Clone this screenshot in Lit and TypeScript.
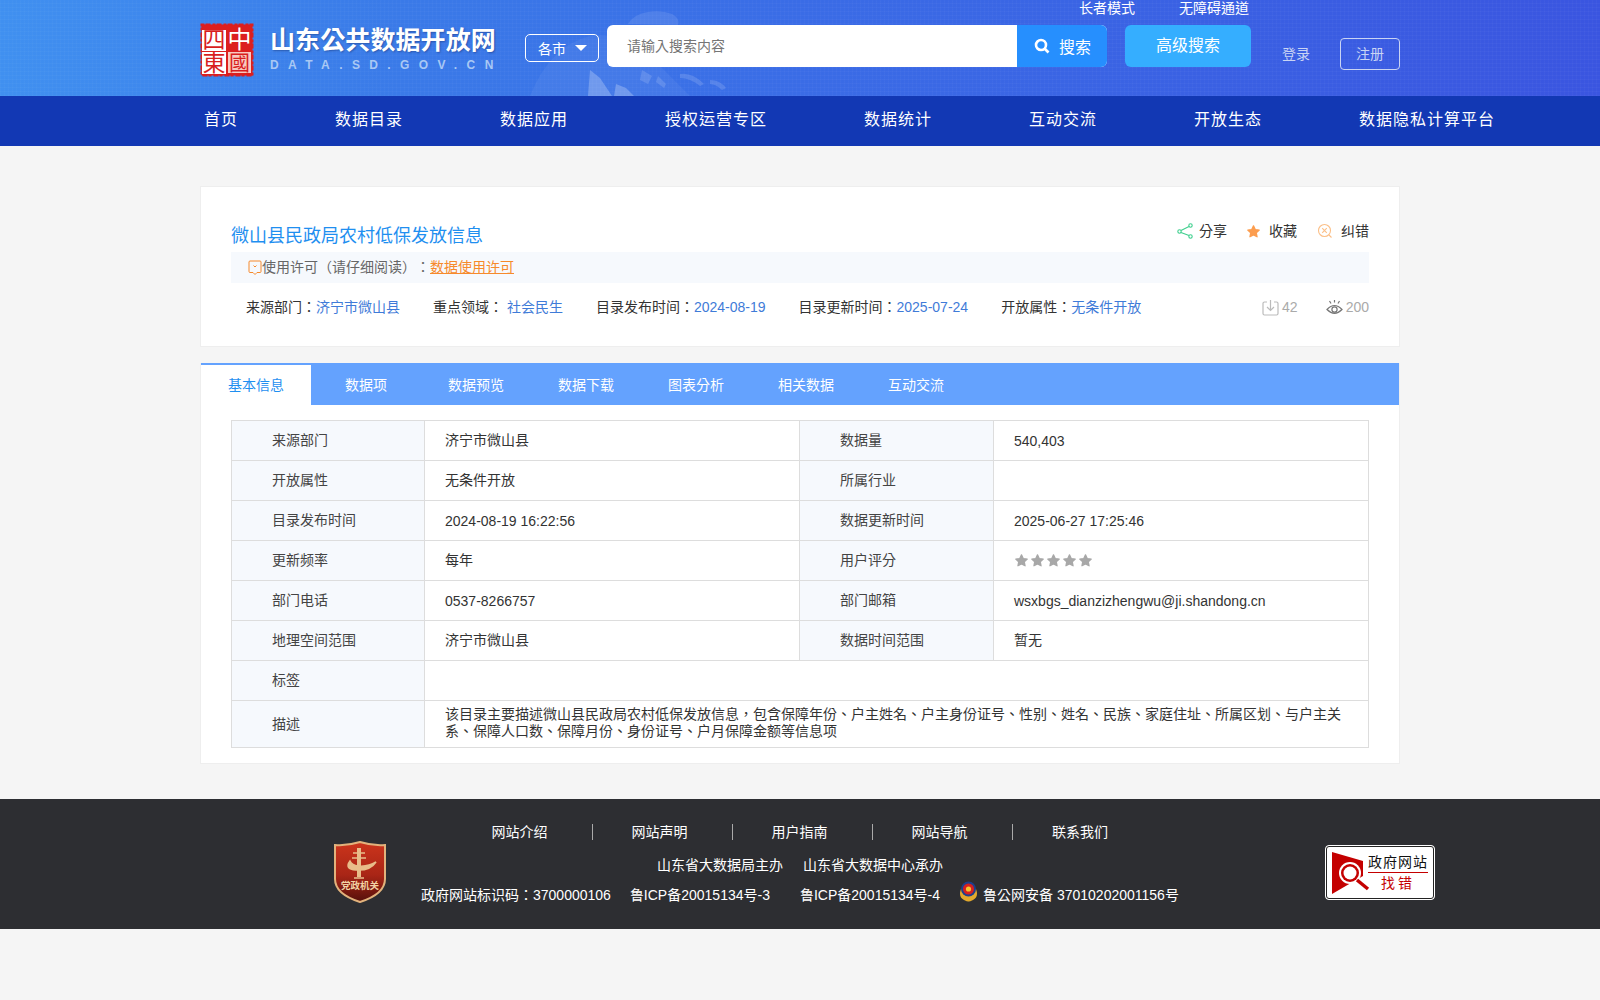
import { LitElement, html, css } from 'lit';

const NAV = ['首页', '数据目录', '数据应用', '授权运营专区', '数据统计', '互动交流', '开放生态', '数据隐私计算平台'];
const TABS = ['基本信息', '数据项', '数据预览', '数据下载', '图表分析', '相关数据', '互动交流'];
const ROWS = [
    ['来源部门', '济宁市微山县', '数据量', '540,403'],
    ['开放属性', '无条件开放', '所属行业', ''],
    ['目录发布时间', '2024-08-19 16:22:56', '数据更新时间', '2025-06-27 17:25:46'],
    ['更新频率', '每年', '用户评分', '*'],
    ['部门电话', '0537-8266757', '部门邮箱', 'wsxbgs_dianzizhengwu@ji.shandong.cn'],
    ['地理空间范围', '济宁市微山县', '数据时间范围', '暂无'],
];
const META = [
    ['来源部门：', '济宁市微山县'],
    ['重点领域： ', '社会民生'],
    ['目录发布时间：', '2024-08-19'],
    ['目录更新时间：', '2025-07-24'],
    ['开放属性：', '无条件开放'],
];
const FOOT = ['网站介绍', '网站声明', '用户指南', '网站导航', '联系我们'];
const DESC = '该目录主要描述微山县民政局农村低保发放信息，包含保障年份、户主姓名、户主身份证号、性别、姓名、民族、家庭住址、所属区划、与户主关系、保障人口数、保障月份、身份证号、户月保障金额等信息项';

const star = (fill: string, size: number) => html`
    <svg width=${size} height=${size} viewBox="0 0 24 24"><path fill=${fill} stroke=${fill} stroke-width="2" stroke-linejoin="round" d="M12 3l2.800 5.900 6.400.8-4.700 4.400 1.200 6.400L12 17.400l-5.700 3.100 1.200-6.400-4.700-4.400 6.400-.8z"/></svg>`;

// latin-only values sit a pixel lower than the CJK ones in the reference
const isLatin = (s: string) => /^[\x20-\x7e]+$/.test(s);

export class AppRoot extends LitElement {
    static styles = css`
        :host {
            display: block;
            min-height: 1000px;
            background: #f5f5f5;
            font-family: "Liberation Sans", "Noto Sans CJK TC", sans-serif;
            font-size: 14px;
            color: #333;
            text-spacing-trim: space-all;
        }
        .wrap { width: 1200px; margin: 0 auto; }
        .header {
            height: 96px;
            position: relative;
            overflow: hidden;
            background:
                repeating-linear-gradient(0deg, rgba(255,255,255,.025) 0 1px, transparent 1px 4px),
                repeating-linear-gradient(90deg, rgba(255,255,255,.025) 0 1px, transparent 1px 4px),
                linear-gradient(90deg, #4090f0 0%, #3a7ae8 25%, #3a6ce6 50%, #3a55e0 100%);
        }
        .map { position: absolute; left: 530px; top: 0; }
        .header .wrap { position: relative; }
        .top-links {
            height: 25px;
            display: flex;
            justify-content: flex-end;
            gap: 44px;
            padding-right: 151px;
            color: #fff;
            line-height: 17px;
        }
        .head-row { display: flex; align-items: flex-start; }
        .seal { width: 54px; height: 54px; margin-top: -2px; flex: none; }
        .brand { margin-left: 16px; width: 255px; color: #fff; flex: none; }
        .brand-name { font-size: 25px; font-weight: bold; line-height: 30px; letter-spacing: .1px; text-shadow: 1px 1px 2px rgba(0,0,40,.3); white-space: nowrap; }
        .brand-sub { font-size: 12px; font-weight: bold; line-height: 16px; margin-top: 2px; letter-spacing: 9.4px; color: #a9c8f4; white-space: nowrap; }
        .city {
            margin-top: 9px;
            width: 74px;
            height: 28px;
            box-sizing: border-box;
            border: 1px solid #fff;
            border-radius: 5px;
            color: #fff;
            display: flex;
            align-items: center;
            gap: 9px;
            padding-left: 12px;
        }
        .city i { border: 6px solid transparent; border-top: 6px solid #fff; border-bottom: 0; width: 0; height: 0; }
        .search { margin-left: 8px; width: 500px; height: 42px; display: flex; border-radius: 6px; overflow: hidden; background: #fff; }
        .search-input { flex: 1; padding-left: 20px; line-height: 42px; color: #757575; }
        .search-btn { width: 90px; background: #268ffe; color: #fff; font-size: 16px; display: flex; align-items: center; gap: 9px; padding-left: 17px; box-sizing: border-box; }
        .adv { margin-left: 18px; width: 126px; height: 42px; border-radius: 6px; background: #35aeff; color: #fff; font-size: 16px; line-height: 42px; text-align: center; }
        .login { margin: 21px 0 0 31px; color: #c9d4f4; line-height: 16px; white-space: nowrap; }
        .reg { margin: 13px 0 0 30px; width: 60px; height: 32px; box-sizing: border-box; border: 1px solid #c9d4f4; border-radius: 4px; color: #c9d4f4; text-align: center; line-height: 30px; }
        .nav { height: 50px; background: #1238b4; }
        .nav .wrap { display: flex; gap: 97px; padding-left: 4px; box-sizing: border-box; }
        .nav a { color: #fff; font-size: 16px; line-height: 48px; letter-spacing: 1px; white-space: nowrap; }
        .card { background: #fff; border: 1px solid #eee; box-sizing: border-box; }
        .info { margin-top: 40px; height: 161px; padding: 36px 30px 0; }
        .title-row { display: flex; justify-content: space-between; height: 29px; }
        .title { font-size: 18px; line-height: 26px; color: #1f8ff0; }
        .actions { display: flex; gap: 20px; height: 18px; line-height: 18px; margin-top: -1px; }
        .actions span { display: flex; align-items: center; gap: 6px; }
        .actions span:first-child { margin-right: -1px; }
        .actions em { font-style: normal; margin-left: 2px; }
        .actions span:first-child em { margin-left: 0; }
        .actions svg { display: block; }
        .license { height: 31px; background: #f6f9fd; display: flex; align-items: center; padding-left: 17px; color: #666; line-height: 31px; }
        .license a { color: #f68a2c; text-decoration: underline; }
        .meta { display: flex; padding: 14px 0 0 15px; line-height: 20px; }
        .meta div { margin-right: 33px; white-space: nowrap; }
        .meta b { font-weight: normal; color: #3f7bd8; }
        .stats { margin-left: auto; display: flex; align-items: center; color: #aaa; }
        .stats svg { display: block; margin-right: 3px; }
        .stats span + svg { margin-left: 28px; }
        .detail { margin-top: 16px; height: 401px; border-top: 0; }
        .tabs { display: flex; height: 42px; background: #64a2fe; }
        .tab { width: 110px; text-align: center; color: #fff; line-height: 44px; }
        .tab.on { background: #fff; color: #1f8ff0; border-top: 2px solid #64a2fe; line-height: 40px; box-sizing: border-box; }
        table { margin: 15px 0 0 30px; width: 1137px; border-collapse: collapse; table-layout: fixed; }
        td { border: 1px solid #ddd; height: 40px; padding: 0 20px; color: #333; box-sizing: border-box; line-height: 17px; }
        td.k { background: #f6f9fd; padding-left: 40px; color: #444; }
        td.latin { padding-top: 2px; }
        td.desc { height: 47px; padding-top: 2px; padding-bottom: 4px; }
        .stars { display: flex; gap: 1px; align-items: center; }
        .stars svg { display: block; }
        .footer { margin-top: 35px; height: 130px; background: #2d2e32; }
        .footer .wrap { height: 130px; display: flex; color: #fff; }
        .shield { margin: 42px 0 0 134px; flex: none; }
        .foot-mid { width: 830px; margin-left: 34px; flex: none; }
        .foot-links { display: flex; padding-top: 25px; margin-left: 33px; height: 16px; }
        .foot-links a { width: 140px; box-sizing: border-box; text-align: center; line-height: 16px; border-right: 1px solid #aaa; padding-right: 6px; }
        .foot-links a:last-child { border-right: 0; }
        .foot-org { margin-top: 17px; line-height: 17px; padding-left: 237px; display: flex; gap: 20px; }
        .foot-id { margin: 13px 0 0 1px; line-height: 17px; display: flex; align-items: center; white-space: nowrap; }
        .foot-id span:last-child { margin-top: -1px; }
        .police { margin: -9px 5px 0 19px; display: block; }
        .bug {
            margin: 46px 0 0 75px; width: 110px; height: 55px; flex: none;
            box-sizing: border-box; background: #fff; border: 1px solid #fff; outline: 1px solid #222; outline-offset: -2px; border-radius: 4px;
            display: flex; align-items: center; padding-left: 6px;
        }
        .bug svg { margin-right: -2px; flex: none; }
        .bug-text { width: 60px; color: #111; text-align: center; font-size: 14px; line-height: 16px; letter-spacing: 1px; white-space: nowrap; }
        .bug-text div:last-child { color: #c40000; border-top: 1px solid #c40000; margin-top: 2px; padding-top: 2px; letter-spacing: 3px; }
    `;

    render() {
        return html`
            <div class="header">
                <svg class="map" width="220" height="96" viewBox="0 0 220 96" fill="#fff">
                    <path opacity=".05" d="M0 96q20-50 60-60 30-6 70 30l30 30z"/>
                    <path opacity=".1" d="M98 24q6-10 20-12 14-2 24 2 8 4 6 11z"/>
                    <path opacity=".24" d="M60 70l10 8 12 18H58zM86 84l10 4 8 8H84z"/>
                    <path opacity=".14" d="M112 70l10 6-4 8-8-4zM128 76l8 8-2 4-8-6zM150 74q12-2 24 10l-4 2q-10-8-20-8zM180 80q10 0 16 8l-4 2q-6-6-12-6z"/>
                </svg>
                <div class="wrap">
                    <div class="top-links"><span>长者模式</span><span>无障碍通道</span></div>
                    <div class="head-row">
                        <svg class="seal" viewBox="0 0 54 54">
                            <rect x="1.500" y="1.500" width="51" height="51" fill="#dc1f1f" stroke="#dc1f1f" stroke-width="2" stroke-dasharray="3 1 5 2"/>
                            <rect x="2" y="7" width="24" height="21" fill="#fff"/>
                            <rect x="2" y="29" width="24" height="22" fill="#fff"/>
                            <rect x="28" y="29" width="23" height="21" fill="#f8c9c0"/>
                            <text x="14" y="25" font-size="23" text-anchor="middle" fill="#d81e1e">四</text>
                            <text x="14" y="48" font-size="23" text-anchor="middle" fill="#d81e1e">東</text>
                            <text x="39.500" y="25" font-size="24" text-anchor="middle" fill="#fff">中</text>
                            <text x="39.500" y="47" font-size="21" text-anchor="middle" fill="#d81e1e">國</text>
                        </svg>
                        <div class="brand">
                            <div class="brand-name">山东公共数据开放网</div>
                            <div class="brand-sub">DATA.SD.GOV.CN</div>
                        </div>
                        <div class="city"><span>各市</span><i></i></div>
                        <div class="search">
                            <div class="search-input">请输入搜索内容</div>
                            <div class="search-btn">
                                <svg width="16" height="16" viewBox="0 0 16 16" fill="none" stroke="#fff" stroke-width="2.600"><circle cx="7" cy="7" r="5"/><path d="M10.500 10.500L14.500 14.500"/></svg>
                                <span>搜索</span>
                            </div>
                        </div>
                        <div class="adv">高级搜索</div>
                        <div class="login">登录</div>
                        <div class="reg">注册</div>
                    </div>
                </div>
            </div>
            <div class="nav"><div class="wrap">${NAV.map((n) => html`<a>${n}</a>`)}</div></div>

            <div class="wrap">
                <div class="card info">
                    <div class="title-row">
                        <div class="title">微山县民政局农村低保发放信息</div>
                        <div class="actions">
                            <span>
                                <svg width="16" height="16" viewBox="0 0 16 16" fill="none" stroke="#3fcf8e" stroke-width="1.100"><circle cx="2.500" cy="8.500" r="1.700"/><circle cx="13.500" cy="2.500" r="1.700"/><circle cx="13.500" cy="13.500" r="1.700"/><path d="M4 7.600L12 3.400M4 9.400L12 12.600"/></svg>
                                <em>分享</em>
                            </span>
                            <span>${star('#fc9d4f', 15)}<em>收藏</em></span>
                            <span>
                                <svg width="16" height="16" viewBox="0 0 16 16" fill="none" stroke="#fbbf87" stroke-width="1.100"><circle cx="7.500" cy="7.500" r="6"/><path d="M5.200 5.200l4.600 4.600M9.800 5.200l-4.600 4.600M12 12l2.500 2.500"/></svg>
                                <em>纠错</em>
                            </span>
                        </div>
                    </div>
                    <div class="license">
                        <svg width="14" height="15" viewBox="0 0 14 15" fill="none" stroke="#f68a2c" stroke-width="1"><path d="M2 1h10a1 1 0 0 1 1 1v9.500a1 1 0 0 1-1 1H9L7 14.500 5 12.500H2a1 1 0 0 1-1-1V2a1 1 0 0 1 1-1z"/><path d="M5.500 5.500L7 7l1.500-1.500"/></svg>
                        <span>使用许可（请仔细阅读）：<a>数据使用许可</a></span>
                    </div>
                    <div class="meta">
                        ${META.map((m) => html`<div>${m[0]}<b>${m[1]}</b></div>`)}
                        <div class="stats" style="margin-right:0">
                            <svg width="17" height="17" viewBox="0 0 17 17" fill="none" stroke="#bbb" stroke-width="1.200"><path d="M5 3H2.500a1.500 1.500 0 0 0-1.500 1.500v10A1.500 1.500 0 0 0 2.500 16h12a1.500 1.500 0 0 0 1.500-1.500v-10A1.500 1.500 0 0 0 14.500 3H12"/><path d="M8.500 1v10M5 8l3.500 3.500L12 8"/></svg>
                            <span>42</span>
                            <svg width="17" height="17" viewBox="0 0 17 17" fill="none" stroke="#777" stroke-width="1.200"><path d="M1 10.500Q8.500 2.500 16 10.500 8.500 18 1 10.500z"/><circle cx="8.500" cy="10.500" r="2.600"/><path d="M8.500 1v2.500M3.500 2l1.500 2.500M13.500 2L12 4.500"/></svg>
                            <span>200</span>
                        </div>
                    </div>
                </div>

                <div class="card detail">
                    <div class="tabs">
                        ${TABS.map((t, i) => html`<div class="tab ${i === 0 ? 'on' : ''}">${t}</div>`)}
                    </div>
                    <table>
                        <colgroup><col style="width:193px"><col style="width:375px"><col style="width:194px"><col style="width:375px"></colgroup>
                        ${ROWS.map((r) => html`
                            <tr>
                                <td class="k">${r[0]}</td>
                                <td class=${isLatin(r[1]) ? 'latin' : ''}>${r[1]}</td>
                                <td class="k">${r[2]}</td>
                                <td class=${r[3] !== '*' && isLatin(r[3]) ? 'latin' : ''}>${r[3] === '*'
                                    ? html`<div class="stars">${[0, 1, 2, 3, 4].map(() => star('#a8a8a8', 15))}</div>`
                                    : r[3]}</td>
                            </tr>`)}
                        <tr><td class="k">标签</td><td colspan="3"></td></tr>
                        <tr><td class="k">描述</td><td colspan="3" class="desc">${DESC}</td></tr>
                    </table>
                </div>
            </div>

            <div class="footer">
                <div class="wrap">
                    <svg class="shield" width="52" height="62" viewBox="0 0 52 62">
                        <defs><linearGradient id="sh" x1="0" y1="0" x2="0" y2="1"><stop offset="0" stop-color="#cc351c"/><stop offset=".55" stop-color="#a92516"/><stop offset="1" stop-color="#55100b"/></linearGradient></defs>
                        <path d="M26 1q13 4 25 3v34q0 15-25 23Q1 53 1 38V4q12 1 25-3z" fill="url(#sh)" stroke="#e2b27c" stroke-width="2"/>
                        <path d="M25 7v29" fill="none" stroke="#e8bd8a" stroke-width="4"/>
                        <path d="M19 12h12M18 17h14M16 20q-6 8 6 9 14 1 20-8-8 5-18 4-6-1-8-5zM20 37h10" fill="#e8bd8a" stroke="#e8bd8a" stroke-width="1.500"/>
                        <text x="26" y="48" font-size="9.500" font-weight="bold" text-anchor="middle" fill="#f3d2a4">党政机关</text>
                    </svg>
                    <div class="foot-mid">
                        <div class="foot-links">${FOOT.map((f) => html`<a>${f}</a>`)}</div>
                        <div class="foot-org"><span>山东省大数据局主办</span><span>山东省大数据中心承办</span></div>
                        <div class="foot-id">
                            <span>政府网站标识码：3700000106</span>
                            <span style="margin-left:19px">鲁ICP备20015134号-3</span>
                            <span style="margin-left:30px">鲁ICP备20015134号-4</span>
                            <svg class="police" width="19" height="21" viewBox="0 0 19 21">
                                <path d="M2 8q-3 8 3 11 4 2 4.500 1.500.5.500 4.500-1.500 6-3 3-11z" fill="#e2a92c"/>
                                <circle cx="9.500" cy="8" r="7.500" fill="#1d3f8c"/>
                                <circle cx="9.500" cy="8" r="5.500" fill="#d62020"/>
                                <circle cx="9.500" cy="8" r="2.600" fill="#f4c430"/>
                            </svg>
                            <span>鲁公网安备 37010202001156号</span>
                        </div>
                    </div>
                    <div class="bug">
                        <svg width="38" height="44" viewBox="0 0 38 44">
                            <path d="M0 1l31 9v15L0 43z" fill="#c40000"/>
                            <circle cx="18" cy="22" r="11" fill="#fff"/>
                            <circle cx="18" cy="22" r="9" fill="#c40000"/>
                            <circle cx="18" cy="22" r="6.500" fill="#fff"/>
                            <path d="M25 29l11 9" stroke="#c40000" stroke-width="3.500"/>
                        </svg>
                        <div class="bug-text"><div>政府网站</div><div>找错</div></div>
                    </div>
                </div>
            </div>
        `;
    }
}

customElements.define('app-root', AppRoot);
